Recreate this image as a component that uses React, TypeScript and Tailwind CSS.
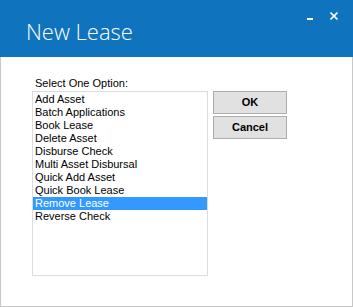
const OPTIONS = [
  "Add Asset",
  "Batch Applications",
  "Book Lease",
  "Delete Asset",
  "Disburse Check",
  "Multi Asset Disbursal",
  "Quick Add Asset",
  "Quick Book Lease",
  "Remove Lease",
  "Reverse Check",
];

const SELECTED = "Remove Lease";

export default function App() {
  return (
    <div className="flex h-[307px] w-[353px] flex-col overflow-hidden bg-white font-['Liberation_Sans',Arial,sans-serif]">
      {/* title bar */}
      <div className="relative h-[57px] shrink-0 bg-[#0f73be]">
        <div className="pl-[26px] pt-[15px] font-['Open_Sans',sans-serif] text-[22px] font-light leading-[32px] text-white">
          New Lease
        </div>
        <div className="absolute right-[40px] top-[18px] h-[2px] w-[6px] bg-white" />
        <svg className="absolute right-[15px] top-[12px]" width="8" height="8" viewBox="0 0 8 8">
          <path d="M0.5 0.5 L7.5 7.5 M7.5 0.5 L0.5 7.5" stroke="white" strokeWidth="1.6" />
        </svg>
      </div>

      {/* body */}
      <div className="flex flex-1 border-x border-b border-[#c8c8c8] pl-[31px] pt-[19px]">
        <div className="flex flex-col">
          <div className="pl-[3px] text-[11px] leading-[14px] text-black">Select One Option:</div>
          <div className="mt-[1px] h-[185px] w-[176px] border border-[#dcdce0] py-[1px]">
            {OPTIONS.map((o) => (
              <div
                key={o}
                className={`h-[13px] pl-[2px] text-[11px] leading-[13px] ${
                  o === SELECTED ? "bg-[#3399ff] text-white" : "text-black"
                }`}
              >
                {o}
              </div>
            ))}
          </div>
        </div>
        <div className="ml-[5px] mt-[15px] flex flex-col gap-[2px]">
          <button className="h-[23px] w-[74px] border border-[#adadad] bg-[#e1e1e1] text-[11px] font-bold text-black">
            OK
          </button>
          <button className="h-[23px] w-[74px] border border-[#adadad] bg-[#e1e1e1] text-[11px] font-bold text-black">
            Cancel
          </button>
        </div>
      </div>
    </div>
  );
}
